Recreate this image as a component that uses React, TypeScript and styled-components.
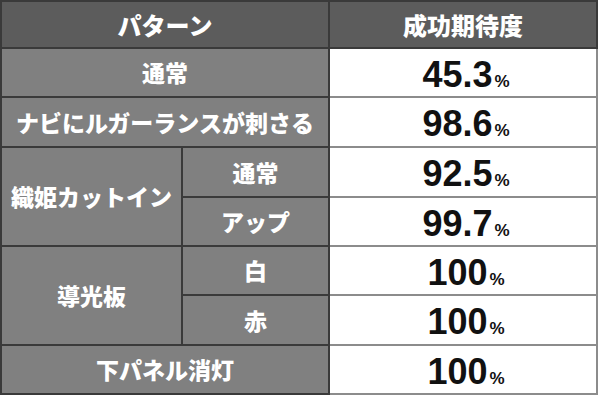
import React from "react";
import styled, { createGlobalStyle } from "styled-components";

const Global = createGlobalStyle`
  html, body { margin: 0; padding: 0; background: #ffffff; }
  #root { width: 600px; height: 404px; }
`;

const Table = styled.table`
  width: 598px;
  border-collapse: collapse;
  table-layout: fixed;
  font-family: "Noto Sans CJK JP", "Noto Sans", sans-serif;
`;

const Row = styled.tr<{ $h: number }>`
  height: ${(p) => p.$h}px;
`;

const HeadCell = styled.th`
  background: #5c5c5c;
  color: #ffffff;
  font-size: 24px;
  font-weight: 900;
  text-align: center;
  vertical-align: middle;
  border: 2px solid #3a3a3a;
  padding: 0;
  line-height: 1;
`;

const LabelCell = styled.td`
  background: #808080;
  color: #ffffff;
  font-size: 23px;
  font-weight: 900;
  text-align: center;
  vertical-align: middle;
  border: 2px solid #3a3a3a;
  padding: 0;
  line-height: 1;
  white-space: nowrap;
`;

const ValueCell = styled.td`
  background: #ffffff;
  text-align: center;
  vertical-align: middle;
  border: 2px solid #8c8c8c;
  padding: 4px 0 0 6px;
  line-height: 1;
  white-space: nowrap;
`;

const Num = styled.span`
  font-family: "Liberation Sans", Arial, sans-serif;
  font-weight: 700;
  font-size: 36px;
  color: #111111;
`;

const Pct = styled.span`
  font-family: "Liberation Sans", Arial, sans-serif;
  font-weight: 700;
  font-size: 17px;
  color: #111111;
  margin-left: 2px;
`;

type Item = { label?: string; span?: number; sub?: string; value: string; h: number };

const rows: Item[] = [
  { label: "通常", value: "45.3", h: 49 },
  { label: "ナビにルガーランスが刺さる", value: "98.6", h: 50 },
  { label: "織姫カットイン", span: 2, sub: "通常", value: "92.5", h: 50 },
  { sub: "アップ", value: "99.7", h: 49 },
  { label: "導光板", span: 2, sub: "白", value: "100", h: 49 },
  { sub: "赤", value: "100", h: 50 },
  { label: "下パネル消灯", value: "100", h: 49 },
];

export default function App() {
  return (
    <>
      <Global />
      <Table>
        <colgroup>
          <col style={{ width: 181 }} />
          <col style={{ width: 147 }} />
          <col />
        </colgroup>
        <thead>
          <Row $h={47}>
            <HeadCell colSpan={2}>パターン</HeadCell>
            <HeadCell>成功期待度</HeadCell>
          </Row>
        </thead>
        <tbody>
          {rows.map((r, i) => (
            <Row $h={r.h} key={i}>
              {r.label && r.sub === undefined && <LabelCell colSpan={2}>{r.label}</LabelCell>}
              {r.label && r.sub !== undefined && <LabelCell rowSpan={r.span}>{r.label}</LabelCell>}
              {r.sub !== undefined && <LabelCell>{r.sub}</LabelCell>}
              <ValueCell>
                <Num>{r.value}</Num>
                <Pct>%</Pct>
              </ValueCell>
            </Row>
          ))}
        </tbody>
      </Table>
    </>
  );
}
